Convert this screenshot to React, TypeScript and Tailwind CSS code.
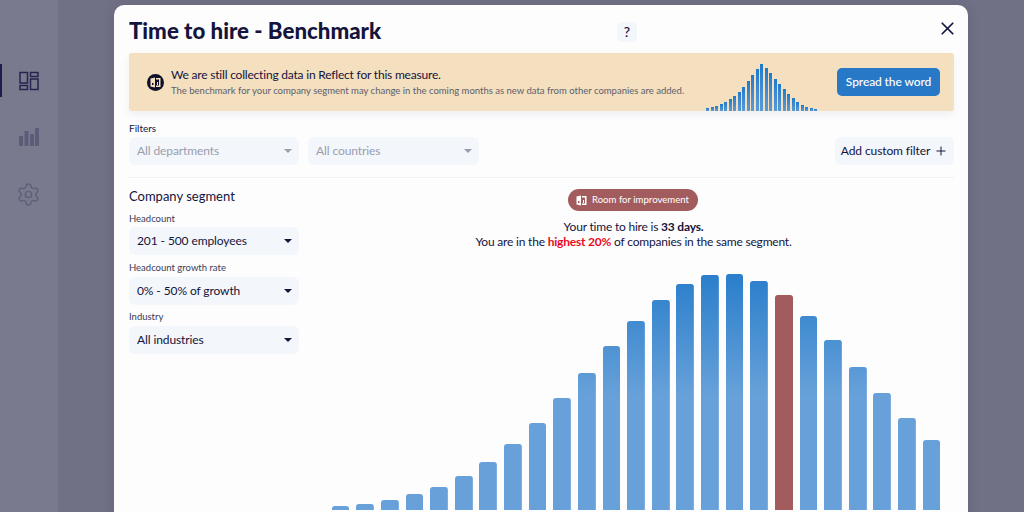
import { Plus, Settings, X } from "lucide-react";

const bigBars = [
  506, 504, 500, 494, 487, 476, 462, 444, 423, 398, 373, 346, 321, 300, 284, 275, 274, 281, 295, 316, 340, 367, 393, 418, 440,
];
const smallBars = [3, 4, 5, 7, 9, 12, 15, 19, 24, 30, 36, 42, 47, 43, 38, 32, 27, 22, 17, 13, 9, 6, 4, 3, 2];

function Caret({ muted }: { muted?: boolean }) {
  return (
    <svg width="8" height="4" viewBox="0 0 8 4" className="shrink-0">
      <path d="M0 0h8L4 4z" fill={muted ? "#9a9dae" : "#14143c"} />
    </svg>
  );
}

function Select({ label, muted, className }: { label: string; muted?: boolean; className: string }) {
  return (
    <div className={`flex h-[28px] items-center justify-between rounded-[6px] bg-[#f3f6fb] pl-[8px] pr-[7px] text-[12px] tracking-[-0.1px] ${muted ? "text-[#9a9dae]" : "text-[#14143c]"} ${className}`}>
      <span>{label}</span>
      <Caret muted={muted} />
    </div>
  );
}

function BookIcon({ color, bg }: { color: string; bg: string }) {
  return (
    <svg width="11" height="11" viewBox="0 0 11 11">
      <path d="M0.5 1.5 5 0.5v10l-4.5-1z" fill={color} />
      <path d="M6 1h4.5v9H6V8.5h3v-6H6z" fill={color} />
      <rect x="2" y="6" width="1.5" height="2" fill={bg} />
      <rect x="7" y="5" width="1" height="3" fill={color} />
    </svg>
  );
}

export default function App() {
  return (
    <div className="flex h-[512px] w-[1024px] overflow-hidden bg-[#717186] font-['Lato',sans-serif] text-[#14143c]">
      <aside className="flex w-[58px] shrink-0 flex-col bg-[#7a7a8f]">
        <div className="mt-[64px] flex h-[33px] items-center border-l-2 border-[#1d1d4d] pl-[17px]">
          <svg width="20" height="20" viewBox="0 0 20 20" fill="none" stroke="#25254f" strokeWidth="1.5">
            <rect x="1" y="1.5" width="7.5" height="10.5" />
            <rect x="1" y="14.5" width="7.5" height="4" />
            <rect x="11.5" y="1.5" width="7.5" height="4" />
            <rect x="11.5" y="8" width="7.5" height="10.5" />
          </svg>
        </div>
        <div className="mt-[31px] pl-[19px]">
          <svg width="20" height="18" viewBox="0 0 20 18" fill="#5c5c78">
            <rect x="0" y="8" width="4" height="10" />
            <rect x="5.5" y="3" width="4" height="15" />
            <rect x="11" y="6" width="4" height="12" />
            <rect x="16" y="0" width="4" height="18" />
          </svg>
        </div>
        <div className="mt-[36px] pl-[16px]">
          <Settings size={25} strokeWidth={1.4} color="#5f5f7b" />
        </div>
      </aside>

      <main className="flex-1 pl-[56px] pr-[56px] pt-[5px]">
        <div className="h-[520px] rounded-[10px] bg-[#fdfdfe] pl-[15px] pr-[14px] pt-[9px] shadow-[0_0_12px_rgba(20,20,60,0.15)]">
          <div className="flex h-[35px] items-center">
            <h1 className="w-[488px] text-[22.25px] font-black leading-none">Time to hire - Benchmark</h1>
            <div className="flex h-[20px] w-[20px] items-center justify-center rounded-[5px] bg-[#f3f6fb] text-[14px] font-medium">?</div>
            <X size={21} strokeWidth={2} className="ml-auto -mt-[7px] -mr-[4px]" />
          </div>

          <div className="mt-[4px] flex h-[58px] items-center rounded-[3px] bg-[#f4dfbe] pl-[18px] pr-[14px] shadow-[0_4px_10px_rgba(20,20,60,0.06)]">
            <div className="flex h-[17px] w-[17px] items-center justify-center rounded-full bg-[#10102a]">
              <BookIcon color="#f4dfbe" bg="#10102a" />
            </div>
            <div className="ml-[7px] w-[535px]">
              <p className="text-[12px] leading-[16px] tracking-[-0.2px]">We are still collecting data in Reflect for this measure.</p>
              <p className="mt-[1px] whitespace-nowrap text-[9.5px] leading-[14px] text-[#5e5e6e]">
                The benchmark for your company segment may change in the coming months as new data from other companies are added.
              </p>
            </div>
            <div className="flex h-full w-[111px] items-end justify-between">
              {smallBars.map((h, i) => (
                <div
                  key={i}
                  className="w-[3px] bg-gradient-to-b from-[#1f7acb] to-[#5b9bd6]"
                  style={{ height: h }}
                />
              ))}
            </div>
            <button className="ml-auto h-[28px] w-[103px] rounded-[5px] bg-[#2878c8] text-[12px] font-medium tracking-[-0.1px] text-white">
              Spread the word
            </button>
          </div>

          <p className="mt-[11px] text-[10px] leading-[12px]">Filters</p>
          <div className="mt-[3px] flex gap-[9px]">
            <Select label="All departments" muted className="w-[170px]" />
            <Select label="All countries" muted className="w-[171px]" />
            <button className="ml-auto flex h-[28px] w-[119px] items-center justify-center gap-[4px] rounded-[6px] bg-[#f3f6fb] text-[12px] tracking-[-0.1px]">
              Add custom filter
              <Plus size={14} strokeWidth={1.7} />
            </button>
          </div>
          <div className="mt-[12px] h-px bg-[#f0f2f6]" />

          <div className="flex gap-[14px]">
            <div className="w-[170px] shrink-0">
              <h2 className="mt-[10px] text-[13px] leading-[16px]">Company segment</h2>
              <p className="mt-[9px] text-[9.5px] leading-[12px] text-[#3a3a55]">Headcount</p>
              <Select label="201 - 500 employees" className="mt-[2px]" />
              <p className="mt-[7px] text-[9.5px] leading-[12px] text-[#3a3a55]">Headcount growth rate</p>
              <Select label="0% - 50% of growth" className="mt-[3px]" />
              <p className="mt-[6px] text-[9.5px] leading-[12px] text-[#3a3a55]">Industry</p>
              <Select label="All industries" className="mt-[3px]" />
            </div>

            <div className="flex flex-1 flex-col items-center">
              <div className="mt-[11px] mr-[2px] flex h-[22px] w-[130px] items-center justify-center gap-[5px] rounded-full bg-[#a35c5d] pt-px text-[9.6px] text-white">
                <BookIcon color="#ffffff" bg="#a35c5d" />
                Room for improvement
              </div>
              <p className="mt-[8px] text-center text-[12px] leading-[15px] tracking-[-0.2px]">
                Your time to hire is <b>33 days.</b>
                <br />
                You are in the <b className="text-[#e80c1c]">highest 20%</b> of companies in the same segment.
              </p>
              <div className="mt-[25px] flex h-[236px] items-end gap-[6.95px] self-start pl-[18.7px]">
                {bigBars.map((top, i) => (
                  <div
                    key={i}
                    className={`w-[17.7px] rounded-t-[3px] ${
                      i === 18
                        ? "bg-[#a35c5d]"
                        : "bg-[linear-gradient(180deg,#2a7ecb_0%,#68a1d9_52%)] bg-[length:100%_236px] bg-bottom bg-no-repeat"
                    }`}
                    style={{ height: 510 - top }}
                  />
                ))}
              </div>
            </div>
          </div>
        </div>
      </main>
    </div>
  );
}
